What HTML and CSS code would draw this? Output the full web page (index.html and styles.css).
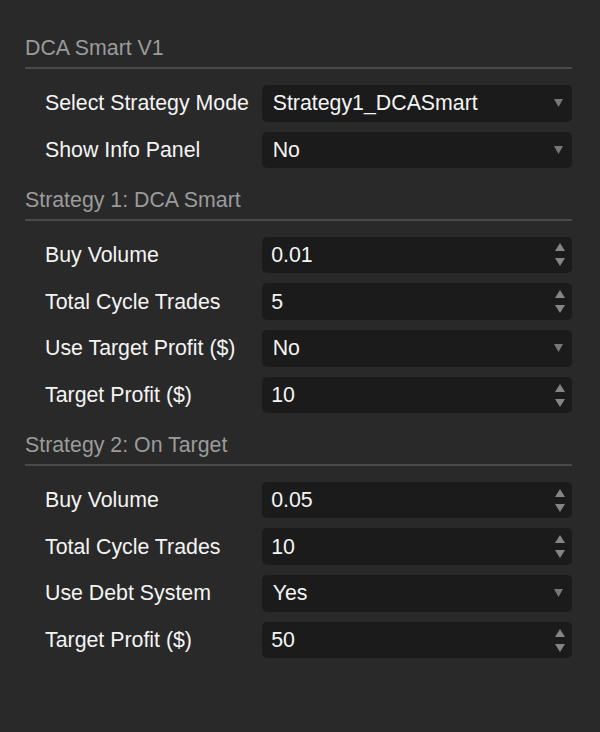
FILE: index.html
```html
<!DOCTYPE html>
<html lang="en">
<head>
<meta charset="utf-8">
<title>DCA Smart V1</title>
<link rel="stylesheet" href="styles.css">
</head>
<body>
<div class="panel">
  <section class="section">
    <h2 class="section-title">DCA Smart V1</h2>
    <div class="rows">
      <div class="row">
        <span class="label">Select Strategy Mode</span>
        <div class="field select"><span class="value">Strategy1_DCASmart</span><svg class="caret" width="9" height="8" viewBox="0 0 9 8"><path d="M0 0H9L4.5 8Z"/></svg></div>
      </div>
      <div class="row">
        <span class="label">Show Info Panel</span>
        <div class="field select"><span class="value">No</span><svg class="caret" width="9" height="8" viewBox="0 0 9 8"><path d="M0 0H9L4.5 8Z"/></svg></div>
      </div>
    </div>
  </section>
  <section class="section">
    <h2 class="section-title">Strategy 1: DCA Smart</h2>
    <div class="rows">
      <div class="row">
        <span class="label">Buy Volume</span>
        <div class="field number"><span class="value">0.01</span><svg class="spin" width="10" height="23" viewBox="0 0 10 23"><path d="M5 0L10 8H0Z"/><path d="M0 15H10L5 23Z"/></svg></div>
      </div>
      <div class="row">
        <span class="label">Total Cycle Trades</span>
        <div class="field number"><span class="value">5</span><svg class="spin" width="10" height="23" viewBox="0 0 10 23"><path d="M5 0L10 8H0Z"/><path d="M0 15H10L5 23Z"/></svg></div>
      </div>
      <div class="row">
        <span class="label">Use Target Profit ($)</span>
        <div class="field select"><span class="value">No</span><svg class="caret" width="9" height="8" viewBox="0 0 9 8"><path d="M0 0H9L4.5 8Z"/></svg></div>
      </div>
      <div class="row">
        <span class="label">Target Profit ($)</span>
        <div class="field number"><span class="value">10</span><svg class="spin" width="10" height="23" viewBox="0 0 10 23"><path d="M5 0L10 8H0Z"/><path d="M0 15H10L5 23Z"/></svg></div>
      </div>
    </div>
  </section>
  <section class="section">
    <h2 class="section-title">Strategy 2: On Target</h2>
    <div class="rows">
      <div class="row">
        <span class="label">Buy Volume</span>
        <div class="field number"><span class="value">0.05</span><svg class="spin" width="10" height="23" viewBox="0 0 10 23"><path d="M5 0L10 8H0Z"/><path d="M0 15H10L5 23Z"/></svg></div>
      </div>
      <div class="row">
        <span class="label">Total Cycle Trades</span>
        <div class="field number"><span class="value">10</span><svg class="spin" width="10" height="23" viewBox="0 0 10 23"><path d="M5 0L10 8H0Z"/><path d="M0 15H10L5 23Z"/></svg></div>
      </div>
      <div class="row">
        <span class="label">Use Debt System</span>
        <div class="field select"><span class="value">Yes</span><svg class="caret" width="9" height="8" viewBox="0 0 9 8"><path d="M0 0H9L4.5 8Z"/></svg></div>
      </div>
      <div class="row">
        <span class="label">Target Profit ($)</span>
        <div class="field number"><span class="value">50</span><svg class="spin" width="10" height="23" viewBox="0 0 10 23"><path d="M5 0L10 8H0Z"/><path d="M0 15H10L5 23Z"/></svg></div>
      </div>
    </div>
  </section>
</div>
</body>
</html>
```
FILE: styles.css
```css
html, body {
  margin: 0;
  padding: 0;
  background: #292929;
  height: 100%;
}
body {
  font-family: "Liberation Sans", Arial, sans-serif;
  font-size: 21.33px;
  color: #f2f2f2;
}
.panel {
  padding: 36px 28px 0 25px;
}
.section + .section {
  margin-top: 19.5px;
}
.section-title {
  margin: 0;
  font-size: 21.33px;
  font-weight: normal;
  line-height: 24px;
  color: #9b9b9b;
  padding-bottom: 7px;
  border-bottom: 2px solid #4a4a4a;
}
.rows {
  margin-top: 16px;
  padding-left: 20px;
  display: flex;
  flex-direction: column;
  gap: 10.2px;
}
.row {
  display: grid;
  grid-template-columns: 216.7px 1fr;
  align-items: center;
}
.label {
  line-height: 24px;
  color: #f4f4f4;
}
.field {
  height: 36.5px;
  background: #1b1b1b;
  border-radius: 5px;
  display: flex;
  align-items: center;
  justify-content: space-between;
  line-height: 24px;
}
.select {
  padding: 0 9px 0 11px;
}
.number {
  padding: 0 7px 0 9.5px;
}
.value {
  color: #f4f4f4;
}
.caret path {
  fill: #777777;
}
.spin path {
  fill: #858585;
}
```
